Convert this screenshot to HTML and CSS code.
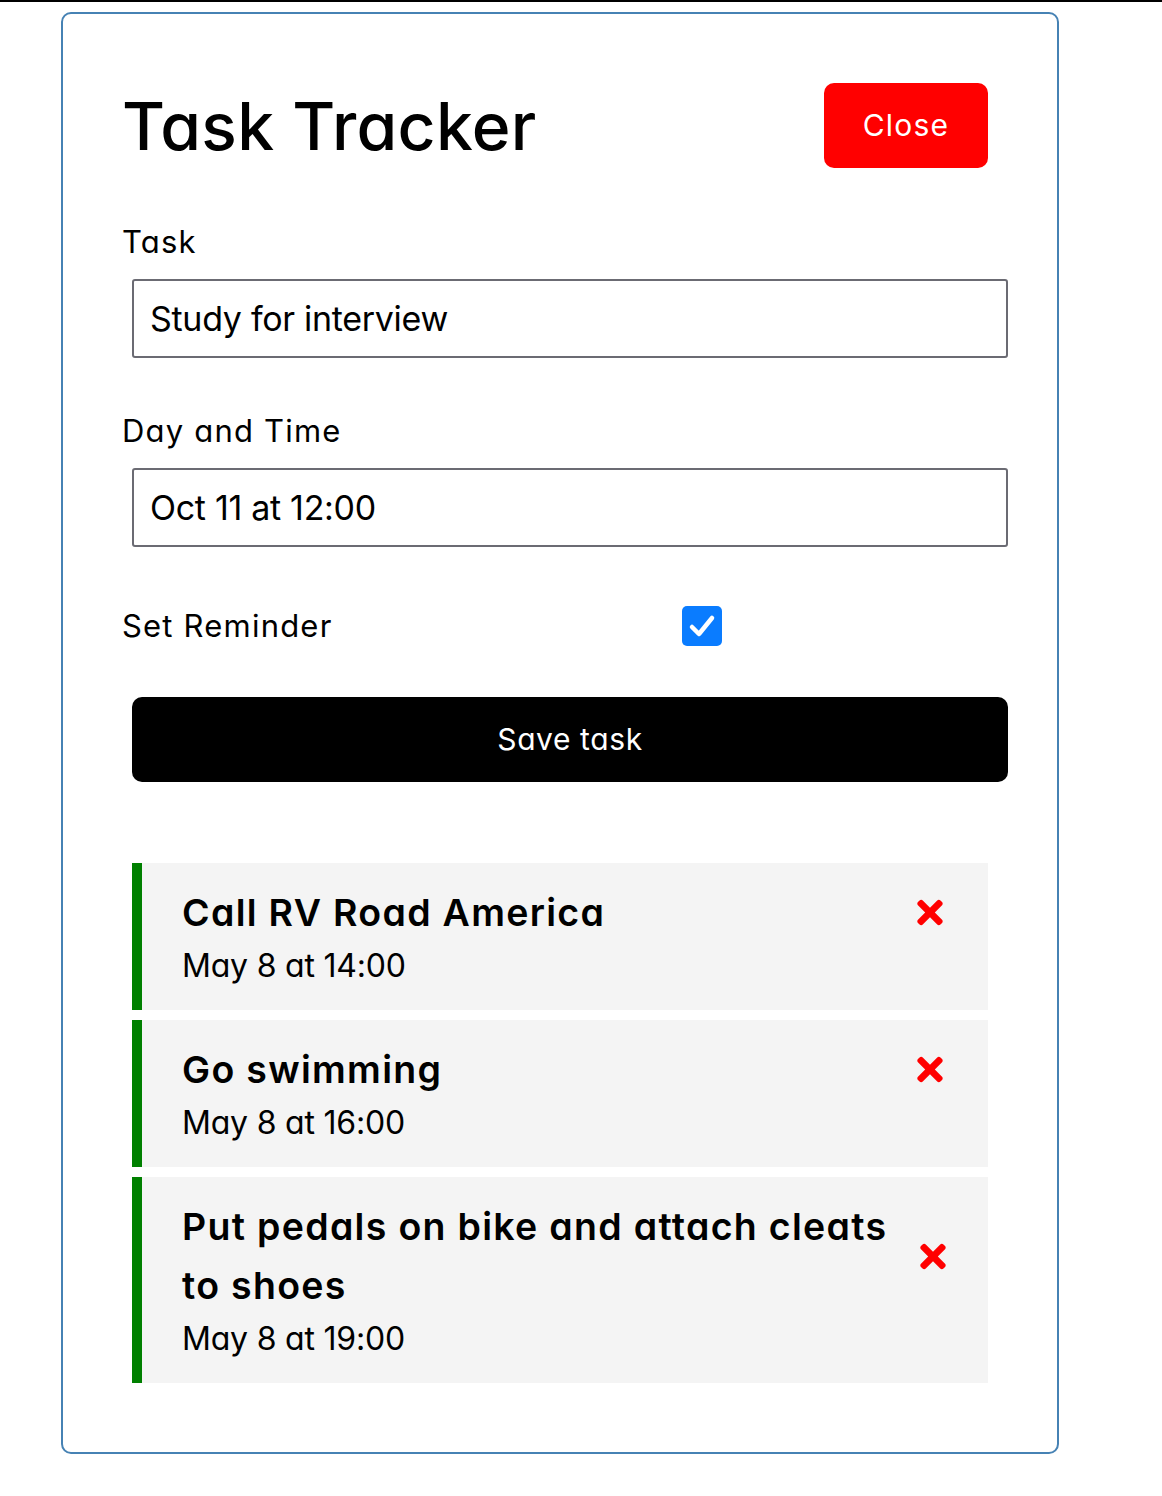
FILE: index.html
```html
<!DOCTYPE html>
<html lang="en">
<head>
<meta charset="utf-8">
<title>Task Tracker</title>
<link rel="stylesheet" href="styles.css">
</head>
<body>
<div class="topbar"></div>
<div class="container">
  <header class="header">
    <h1>Task Tracker</h1>
    <button class="btn btn-close" type="button">Close</button>
  </header>
  <form class="add-form">
    <div class="form-control">
      <label>Task</label>
      <input type="text" value="Study for interview">
    </div>
    <div class="form-control">
      <label>Day and Time</label>
      <input type="text" value="Oct 11 at 12:00">
    </div>
    <div class="form-control form-control-check">
      <label>Set Reminder</label>
      <span class="check-wrap">
        <span class="checkbox">
          <svg viewBox="0 0 40 40" width="40" height="40"><path d="M10 21 L17 28 L30 12" fill="none" stroke="#fff" stroke-width="4.5" stroke-linecap="round" stroke-linejoin="round"/></svg>
        </span>
      </span>
    </div>
    <button type="button" class="btn btn-block">Save task</button>
  </form>
  <div class="tasks">
    <div class="task reminder">
      <h3><span class="task-title">Call RV Road America</span><svg class="del" viewBox="0 0 352 512"><path d="M242.72 256l100.07-100.070c12.28-12.28 12.28-32.19 0-44.48l-22.24-22.24c-12.28-12.28-32.19-12.28-44.48 0L176 189.28 75.93 89.21c-12.28-12.28-32.19-12.28-44.48 0L9.21 111.45c-12.28 12.28-12.28 32.19 0 44.48L109.28 256 9.21 356.07c-12.28 12.28-12.28 32.19 0 44.48l22.24 22.24c12.28 12.28 32.2 12.28 44.48 0L176 322.72l100.07 100.07c12.28 12.28 32.2 12.28 44.48 0l22.24-22.24c12.28-12.28 12.28-32.19 0-44.48L242.72 256z"/></svg></h3>
      <p>May 8 at 14:00</p>
    </div>
    <div class="task reminder">
      <h3><span class="task-title">Go swimming</span><svg class="del" viewBox="0 0 352 512"><path d="M242.72 256l100.07-100.070c12.28-12.28 12.28-32.19 0-44.48l-22.24-22.24c-12.28-12.28-32.19-12.28-44.48 0L176 189.28 75.93 89.21c-12.28-12.28-32.19-12.28-44.48 0L9.21 111.45c-12.28 12.28-12.28 32.19 0 44.48L109.28 256 9.21 356.07c-12.28 12.28-12.28 32.19 0 44.48l22.24 22.24c12.28 12.28 32.2 12.28 44.48 0L176 322.72l100.07 100.07c12.28 12.28 32.2 12.28 44.48 0l22.24-22.24c12.28-12.28 12.28-32.19 0-44.48L242.72 256z"/></svg></h3>
      <p>May 8 at 16:00</p>
    </div>
    <div class="task reminder">
      <h3><span class="task-title">Put pedals on bike and attach cleats to shoes</span><svg class="del del-wrap" viewBox="0 0 352 512"><path d="M242.72 256l100.07-100.070c12.28-12.28 12.28-32.19 0-44.48l-22.24-22.24c-12.28-12.28-32.19-12.28-44.48 0L176 189.28 75.93 89.21c-12.28-12.28-32.19-12.28-44.48 0L9.21 111.45c-12.28 12.28-12.28 32.19 0 44.48L109.28 256 9.21 356.07c-12.28 12.28-12.28 32.19 0 44.48l22.24 22.24c12.28 12.28 32.2 12.28 44.48 0L176 322.72l100.07 100.07c12.28 12.28 32.2 12.28 44.48 0l22.24-22.24c12.28-12.28 12.28-32.19 0-44.48L242.72 256z"/></svg></h3>
      <p>May 8 at 19:00</p>
    </div>
  </div>
</div>
</body>
</html>
```

FILE: styles.css
```css
* {
  box-sizing: border-box;
  margin: 0;
  padding: 0;
}

body {
  font-family: Inter, "Noto Sans", sans-serif;
  font-feature-settings: "cv11" 1;
  color: #000;
  background: #fff;
}

.topbar {
  height: 2px;
  background: #000;
}

.container {
  width: 998px;
  margin: 10px 0 0 61px;
  border: 2px solid #4682b4;
  border-radius: 10px;
  padding: 59px;
}

.header {
  display: flex;
  justify-content: space-between;
  align-items: center;
  margin-bottom: 40px;
}

.header h1 {
  font-size: 66px;
  font-weight: 500;
  line-height: 96px;
  letter-spacing: 0.3px;
}

.btn {
  display: inline-block;
  background: #000;
  color: #fff;
  border: none;
  padding: 20px 40px;
  margin: 10px;
  border-radius: 10px;
  font-family: inherit;
  font-feature-settings: "cv11" 1;
  font-size: 30px;
  line-height: 45px;
  letter-spacing: 0.6px;
  cursor: pointer;
}

.btn-close {
  background: #ff0000;
  width: 164px;
  padding: 20px 0;
  letter-spacing: 1.2px;
}

.btn-block {
  display: block;
  width: 876px;
  margin: 0 10px;
}

.add-form {
  margin-bottom: 81px;
}

.form-control {
  margin-bottom: 49px;
}

.form-control label {
  display: block;
  font-size: 31px;
  line-height: 48px;
  letter-spacing: 1.2px;
}

.form-control input {
  display: block;
  width: 876px;
  height: 79px;
  margin: 13px 10px 0;
  padding: 3px 16px;
  font-family: Inter, sans-serif;
  font-size: 34px;
  letter-spacing: -0.3px;
  color: #000;
  border: 2px solid #6b6b73;
  border-radius: 3px;
  background: #fff;
}

.form-control-check {
  display: flex;
  align-items: center;
  margin-bottom: 41px;
}

.form-control-check label {
  flex: 1;
}

.check-wrap {
  flex: 2;
  display: flex;
  justify-content: center;
  margin: 10px;
  height: 40px;
}

.checkbox {
  width: 40px;
  height: 40px;
  background: #0a7cff;
  border-radius: 5px;
  display: block;
  margin-left: -2px;
}

.checkbox svg {
  display: block;
}

.task {
  background: #f4f4f4;
  margin: 10px;
  padding: 20px 40px;
}

.task.reminder {
  border-left: 10px solid #008000;
}

.task h3 {
  display: flex;
  align-items: center;
  justify-content: space-between;
  font-size: 37.5px;
  font-weight: 600;
  line-height: 59px;
  letter-spacing: 1.3px;
}

.del {
  width: 26px;
  height: 37px;
  fill: #ff0000;
  flex-shrink: 0;
  margin-right: 5px;
}

.del-wrap {
  margin-right: 2px;
}

.task p {
  font-size: 32px;
  line-height: 48px;
  letter-spacing: -0.2px;
}
```
